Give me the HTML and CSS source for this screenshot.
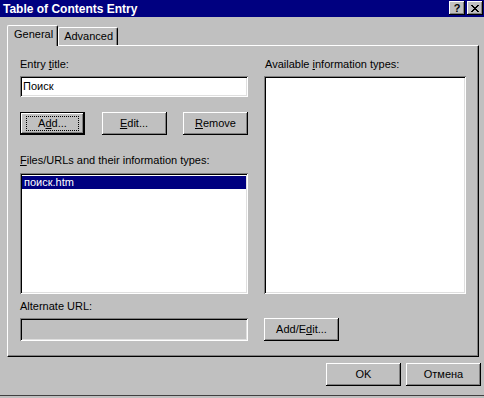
FILE: index.html
```html
<!DOCTYPE html>
<html lang="en">
<head>
    <meta charset="UTF-8">
    <title>Table of Contents Entry</title>
    <link rel="stylesheet" href="styles.css">
</head>
<body>
    <div class="window">
        <div class="titlebar">
            <span class="title">Table of Contents Entry</span>
            <div class="caption-buttons">
                <div class="caption-btn help">?</div>
                <div class="caption-btn">
                    <svg width="8" height="7" viewBox="0 0 8 7">
                        <path d="M0 0h2v1h-2zM6 0h2v1h-2zM1 1h2v1h-2zM5 1h2v1h-2zM2 2h4v1h-4zM3 3h2v1h-2zM2 4h4v1h-4zM1 5h2v1h-2zM5 5h2v1h-2zM0 6h2v1h-2zM6 6h2v1h-2z" fill="#000"/>
                    </svg>
                </div>
            </div>
        </div>

        <div class="tabs">
            <div class="tab active">General</div>
            <div class="tab">Advanced</div>
        </div>

        <div class="panel">
            <div class="form">
                <div class="lbl">Entry <u>t</u>itle:</div>
                <div class="lbl avail-lbl">Available <u>i</u>nformation types:</div>

                <div class="field entry">Поиск</div>
                <div class="listbox avail"></div>

                <div class="btn-row">
                    <div class="btn default"><span class="focus">A<u>d</u>d...</span></div>
                    <div class="btn"><u>E</u>dit...</div>
                    <div class="btn"><u>R</u>emove</div>
                </div>

                <div class="lbl files-lbl"><u>F</u>iles/URLs and their information types:</div>
                <div class="listbox files">
                    <div class="item selected">поиск.htm</div>
                </div>

                <div class="lbl alt-lbl">Alternate URL:</div>
                <div class="field alt disabled"></div>
                <div class="btn addedit">Add/E<u>d</u>it...</div>
            </div>
        </div>

        <div class="footer">
            <div class="btn">OK</div>
            <div class="btn">Отмена</div>
        </div>
    </div>
</body>
</html>
```

FILE: styles.css
```css
body {
    margin: 0;
    font-family: "Liberation Sans", Arial, sans-serif;
    font-size: 11px;
    color: #000000;
    background-color: #c0c0c0;
}

u {
    text-decoration-thickness: 1px;
    text-underline-offset: 1px;
}

.window {
    width: 484px;
    height: 396px;
    box-sizing: border-box;
    background-color: #c0c0c0; /* classic dialog gray */
    border-bottom: 1px solid #404040;
    display: flex;
    flex-direction: column;
}

/* Title bar */
.titlebar {
    height: 17px;
    background-color: #000080;
    color: #ffffff;
    display: flex;
    align-items: center;
    padding-left: 3px;
}

.title {
    font-weight: bold;
    font-size: 12px;
}

.caption-buttons {
    margin-left: auto;
    display: flex;
    gap: 2px;
    padding-right: 1px;
    align-self: flex-start;
    margin-top: 1px;
}

.caption-btn {
    width: 16px;
    height: 14px;
    box-sizing: border-box;
    background-color: #c0c0c0;
    box-shadow: inset -1px -1px #000000, inset 1px 1px #ffffff, inset -2px -2px #808080;
    display: flex;
    align-items: center;
    justify-content: center;
    color: #000000;
}

.caption-btn.help {
    font-weight: bold;
    font-size: 11px;
    line-height: 14px;
}

/* Tabs */
.tabs {
    display: flex;
    align-items: flex-end;
    margin-top: 8px;
    padding-left: 7px;
    height: 20px;
}

.tab {
    box-sizing: border-box;
    height: 18px;
    padding: 0 4px 0 5px;
    line-height: 16px;
    border-top: 1px solid #ffffff;
    border-left: 1px solid #ffffff;
    border-right: 1px solid #000000;
    border-radius: 2px 2px 0 0;
    box-shadow: inset -1px 0 #808080;
}

.tab.active {
    height: 21px;
    margin-bottom: -1px;
    padding: 0 4px 0 6px;
    line-height: 17px;
    background-color: #c0c0c0;
    position: relative;
    z-index: 1;
}

/* Tab page */
.panel {
    margin-left: 7px;
    width: 472px;
    height: 312px;
    box-sizing: border-box;
    border-top: 1px solid #ffffff;
    border-left: 1px solid #ffffff;
    border-right: 1px solid #000000;
    border-bottom: 1px solid #000000;
    box-shadow: inset -1px -1px #808080;
    padding: 12px 0 0 12px;
}

.form {
    display: grid;
    grid-template-columns: 228px 202px;
    column-gap: 16px;
    grid-template-areas:
        "l1 l2"
        "entry avail"
        "btns avail"
        "l3 avail"
        "files avail"
        "l4 ."
        "alt addedit";
}

.lbl {
    line-height: 13px;
    margin-bottom: 5px;
    white-space: nowrap;
}

.avail-lbl { padding-left: 1px; }

.files-lbl {
    grid-area: l3;
    margin-bottom: 6px;
}

.alt-lbl {
    grid-area: l4;
}

/* Sunken edit fields and list boxes */
.field,
.listbox {
    box-sizing: border-box;
    background-color: #ffffff;
    box-shadow: inset 1px 1px #808080, inset -1px -1px #ffffff, inset 2px 2px #000000, inset -2px -2px #dfdfdf;
}

.field {
    padding: 3px 3px;
    line-height: 15px;
}

.entry {
    grid-area: entry;
    height: 21px;
    margin-bottom: 15px;
}

.alt {
    grid-area: alt;
    height: 23px;
}

.field.disabled {
    background-color: #c0c0c0;
}

.listbox {
    padding: 3px 2px 2px 2px;
}

.avail {
    grid-area: avail;
    margin-bottom: 6px;
}

.files {
    grid-area: files;
    height: 121px;
    margin-bottom: 6px;
}

.item {
    height: 13px;
    line-height: 13px;
    padding-left: 2px;
}

.item.selected {
    background-color: #000080;
    color: #ffffff;
}

/* Push buttons */
.btn-row {
    grid-area: btns;
    display: flex;
    justify-content: space-between;
    margin-bottom: 19px;
}

.btn {
    width: 65px;
    height: 23px;
    box-sizing: border-box;
    background-color: #c0c0c0;
    box-shadow: inset -1px -1px #000000, inset 1px 1px #ffffff, inset -2px -2px #808080;
    display: flex;
    align-items: center;
    justify-content: center;
    padding-bottom: 1px;
}

.btn.default {
    box-shadow: inset 0 0 0 1px #000000, inset -2px -2px #000000, inset 2px 2px #ffffff, inset -3px -3px #808080;
}

.btn .focus {
    display: flex;
    align-items: center;
    justify-content: center;
    width: 53px;
    height: 15px;
    box-sizing: border-box;
    border: 1px dotted #000000;
}

.addedit {
    grid-area: addedit;
    width: 75px;
}

.footer {
    display: flex;
    justify-content: flex-end;
    gap: 5px;
    margin-top: 6px;
    padding-right: 3px;
}

.footer .btn {
    width: 75px;
}
```
